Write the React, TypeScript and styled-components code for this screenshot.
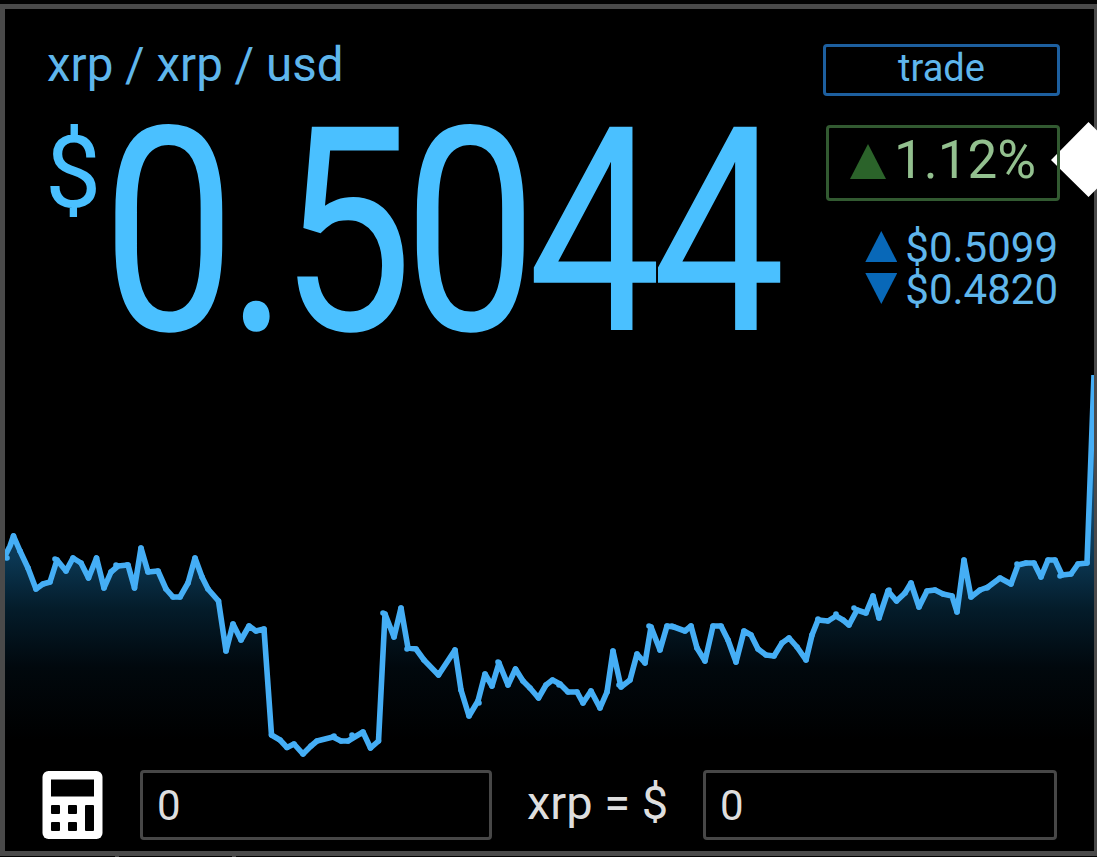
import * as React from "react";
import styled, { createGlobalStyle } from "styled-components";

const GlobalStyle = createGlobalStyle`
  * {
    box-sizing: border-box;
  }

  body {
    margin: 0;
    background: #000;
    font-family: Roboto, "Liberation Sans", sans-serif;
    overflow: hidden;
  }
`;

const Page = styled.div`
  position: relative;
  display: flex;
  flex-direction: column;
  width: 1097px;
  height: 857px;
  padding-top: 4px;
  background: #020202;
  overflow: hidden;
`;

const Panel = styled.main`
  display: flex;
  flex-direction: column;
  height: 852px;
  border: solid #4a4a4a;
  border-width: 5px 3px 5px 5px;
  background: #000;
`;

const Summary = styled.section`
  display: flex;
  justify-content: space-between;
  height: 361px;
  padding: 28px 34px 0 41px;
`;

const Pair = styled.h1`
  margin: 0;
  padding-left: 1px;
  color: #5fb6ec;
  font-size: 47.5px;
  font-weight: 400;
  line-height: 56px;
  white-space: nowrap;
`;

const Price = styled.div`
  display: flex;
  align-items: flex-start;
  color: #4ac0ff;
`;

const Currency = styled.span`
  width: 56px;
  margin: 30px 1px 0 -1px;
  font-size: 100px;
  line-height: 100px;
`;

const Amount = styled.span`
  width: 680px;
  font-size: 286px;
  line-height: 280px;
  letter-spacing: -11.5px;
  transform: scaleX(0.832);
  transform-origin: 0 0;
`;

const Stats = styled.aside`
  display: flex;
  flex-direction: column;
  align-items: flex-end;
  padding-top: 7px;
`;

const TradeButton = styled.button`
  width: 237px;
  height: 52px;
  padding: 0 0 4px;
  border: 3px solid #1d5f9f;
  border-radius: 4px;
  background: transparent;
  color: #5fb6ec;
  font-family: inherit;
  font-size: 38px;
  line-height: 42px;
`;

const Change = styled.div`
  position: relative;
  z-index: 1;
  display: flex;
  align-items: flex-start;
  gap: 8px;
  width: 234px;
  height: 76px;
  margin-top: 29px;
  padding: 0 0 0 21px;
  border: 3px solid #325a31;
  border-radius: 4px;
  color: #93c08f;
  font-size: 53px;
  line-height: 64px;
`;

const Range = styled.div`
  display: flex;
  flex-direction: column;
  margin: 26px 2px 0 0;
`;

const RangeRow = styled.div`
  display: flex;
  align-items: flex-start;
  gap: 8px;
  height: 42px;
  color: #5fb6ec;
  font-size: 42px;
  line-height: 42px;
`;

const Arrow = styled.span<{ $size: number; $color: string; $top: number; $down?: boolean }>`
  width: ${(p) => p.$size}px;
  height: ${(p) => p.$size - 1}px;
  margin-top: ${(p) => p.$top}px;
  background: ${(p) => p.$color};
  clip-path: ${(p) =>
    p.$down ? "polygon(0 0, 100% 0, 50% 100%)" : "polygon(50% 0, 100% 100%, 0 100%)"};
`;

const Chart = styled.svg`
  display: block;
  width: 1089px;
  height: 400px;
`;

const Converter = styled.form`
  display: flex;
  align-items: center;
  height: 70px;
  padding: 0 37px 0 37px;
`;

const CalcIcon = styled.svg`
  width: 61px;
  height: 68px;
  margin-right: 37px;
`;

const Field = styled.input`
  width: ${(p) => p.width}px;
  height: 70px;
  padding: 0 14px;
  border: 3px solid #474747;
  border-radius: 4px;
  background: #000;
  color: #dedede;
  font-family: inherit;
  font-size: 42px;
  outline: none;
`;

const Equals = styled.span`
  flex: 1;
  color: #dedede;
  font-size: 47px;
  line-height: 66px;
  padding-bottom: 4px;
  text-align: center;
  white-space: nowrap;
`;

const Diamond = styled.svg`
  position: absolute;
  top: 122px;
  left: 1051px;
  width: 46px;
  height: 76px;
`;

const Ticks = styled.div`
  display: flex;
  gap: 113px;
  height: 1px;
  padding-left: 115px;
`;

const Tick = styled.span`
  width: 4px;
  background: #4a4a4a;
`;

const history: [number, number][] = [
  [7, 558], [13.5, 536], [20, 551], [28, 568], [36, 589], [43, 584], [50, 582],
  [57, 560], [66, 571], [73, 558], [81, 563], [88.5, 578], [96.5, 558],
  [104, 588], [111, 572], [118, 566], [128, 565], [134.5, 588], [141, 548],
  [148, 572], [158, 571], [166, 589], [173, 597], [180, 597], [188, 583],
  [195, 558], [202, 577], [208, 589], [218.5, 601], [226, 651], [233, 624],
  [241, 640], [249, 626], [256, 631], [264, 629], [271.5, 735], [280, 740],
  [287, 747.5], [294, 744], [303, 754], [311, 746], [317, 741], [333, 737],
  [341, 741], [348, 741], [363, 732], [370.5, 748], [378.5, 741], [385, 614],
  [394, 637], [401, 608], [408, 648], [416, 649], [424, 660], [438.5, 675],
  [455, 650], [461, 690], [469, 716], [478, 701], [485, 674], [492, 686],
  [499, 663], [508, 685], [515.5, 669], [523, 681], [530, 688], [538.5, 698],
  [546, 685], [552.5, 680], [560, 684], [568, 692], [577, 692], [583, 703],
  [591, 691], [600, 708], [607, 692], [613, 651], [621, 687], [630, 680],
  [637, 654], [645, 663], [651, 627], [660, 650], [667, 626], [674, 627],
  [685, 631], [691, 626], [697, 648], [705, 661], [713, 626], [721, 626],
  [728, 640], [736, 662], [744, 631], [751, 635], [758, 649], [766, 655],
  [774, 656], [782, 643], [789, 638], [797, 647], [806, 660], [812, 635],
  [818, 620], [828, 621], [836, 616], [843, 620], [849, 625], [857, 610],
  [866, 613], [873, 596], [879, 618], [888, 591], [896.5, 601], [905, 593],
  [911, 583], [919, 607], [927, 591], [935, 590], [943, 594], [952, 596],
  [957, 612], [964, 560], [971, 597], [980, 590], [988, 587], [1000, 578],
  [1011, 584], [1018, 565], [1026, 563], [1034, 563], [1041, 577], [1048, 560],
  [1055, 560], [1062, 575], [1071, 574], [1078, 564], [1087, 563], [1094, 375],
];

const strays: [number, number][] = [
  [55, 559], [116, 565], [127, 565], [148, 571], [334, 736], [352, 735],
  [383, 613], [407, 649], [479, 703], [498, 662], [649, 626], [619, 685],
  [559, 685], [672, 626], [818, 619], [836, 614], [854, 608], [1017, 564],
  [1060, 576], [889, 590], [987, 588],
];

const line = history.map(([x, y]) => `${x},${y}`).join(" ");

export default function App() {
  return (
    <>
      <GlobalStyle />
      <Page>
        <Panel>
          <Summary>
            <div>
              <Pair>xrp / xrp / usd</Pair>
              <Price>
                <Currency>$</Currency>
                <Amount>0.5044</Amount>
              </Price>
            </div>
            <Stats>
              <TradeButton type="button">trade</TradeButton>
              <Change>
                <Arrow $size={36} $color="#2b632a" $top={16} />
                1.12%
              </Change>
              <Range>
                <RangeRow>
                  <Arrow $size={32} $color="#0868b8" $top={4} />
                  $0.5099
                </RangeRow>
                <RangeRow>
                  <Arrow $size={32} $color="#0868b8" $top={4} $down />
                  $0.4820
                </RangeRow>
              </Range>
            </Stats>
          </Summary>
          <Chart viewBox="5 370 1089 400">
            <defs>
              <linearGradient id="fade" gradientUnits="userSpaceOnUse" x1="0" y1="376" x2="0" y2="740">
                <stop offset="0" stopColor="#21689c" />
                <stop offset="0.5" stopColor="#0b3753" />
                <stop offset="0.64" stopColor="#041c2a" />
                <stop offset="0.8" stopColor="#01080d" />
                <stop offset="1" stopColor="#000" />
              </linearGradient>
            </defs>
            <polygon points={`5,761 5,560 ${line} 1094,761`} fill="url(#fade)" />
            <polyline
              points={`5,556 10,546 ${line.slice(line.indexOf(" ") + 1)}`}
              fill="none"
              stroke="#45aef5"
              strokeWidth="5.6"
              strokeLinejoin="round"
            />
            {[...history.slice(0, -1), ...strays].map(([x, y], i) => (
              <circle key={i} cx={x} cy={y} r="2.8" fill="#45aef5" />
            ))}
          </Chart>
          <Converter>
            <CalcIcon viewBox="0 0 61 68">
              <rect x="0.5" width="60" height="68" rx="6" fill="#fff" />
              <g fill="#000">
                <rect x="9" y="8.5" width="43" height="17" />
                <rect x="9" y="34" width="9" height="9" rx="1" />
                <rect x="26" y="34" width="9" height="9" rx="1" />
                <rect x="9" y="51" width="9" height="9" rx="1" />
                <rect x="26" y="51" width="9" height="9" rx="1" />
                <rect x="43" y="34" width="9" height="26" rx="1" />
              </g>
            </CalcIcon>
            <Field width={352} defaultValue="0" aria-label="xrp" />
            <Equals>xrp = $</Equals>
            <Field width={354} defaultValue="0" aria-label="usd" />
          </Converter>
        </Panel>
        <Ticks>
          <Tick />
          <Tick />
        </Ticks>
        <Diamond viewBox="0 0 46 76">
          <path d="M37.5 0 75 38 37.5 75 2 40 0 38 2 36Z" fill="#fff" />
        </Diamond>
      </Page>
    </>
  );
}
